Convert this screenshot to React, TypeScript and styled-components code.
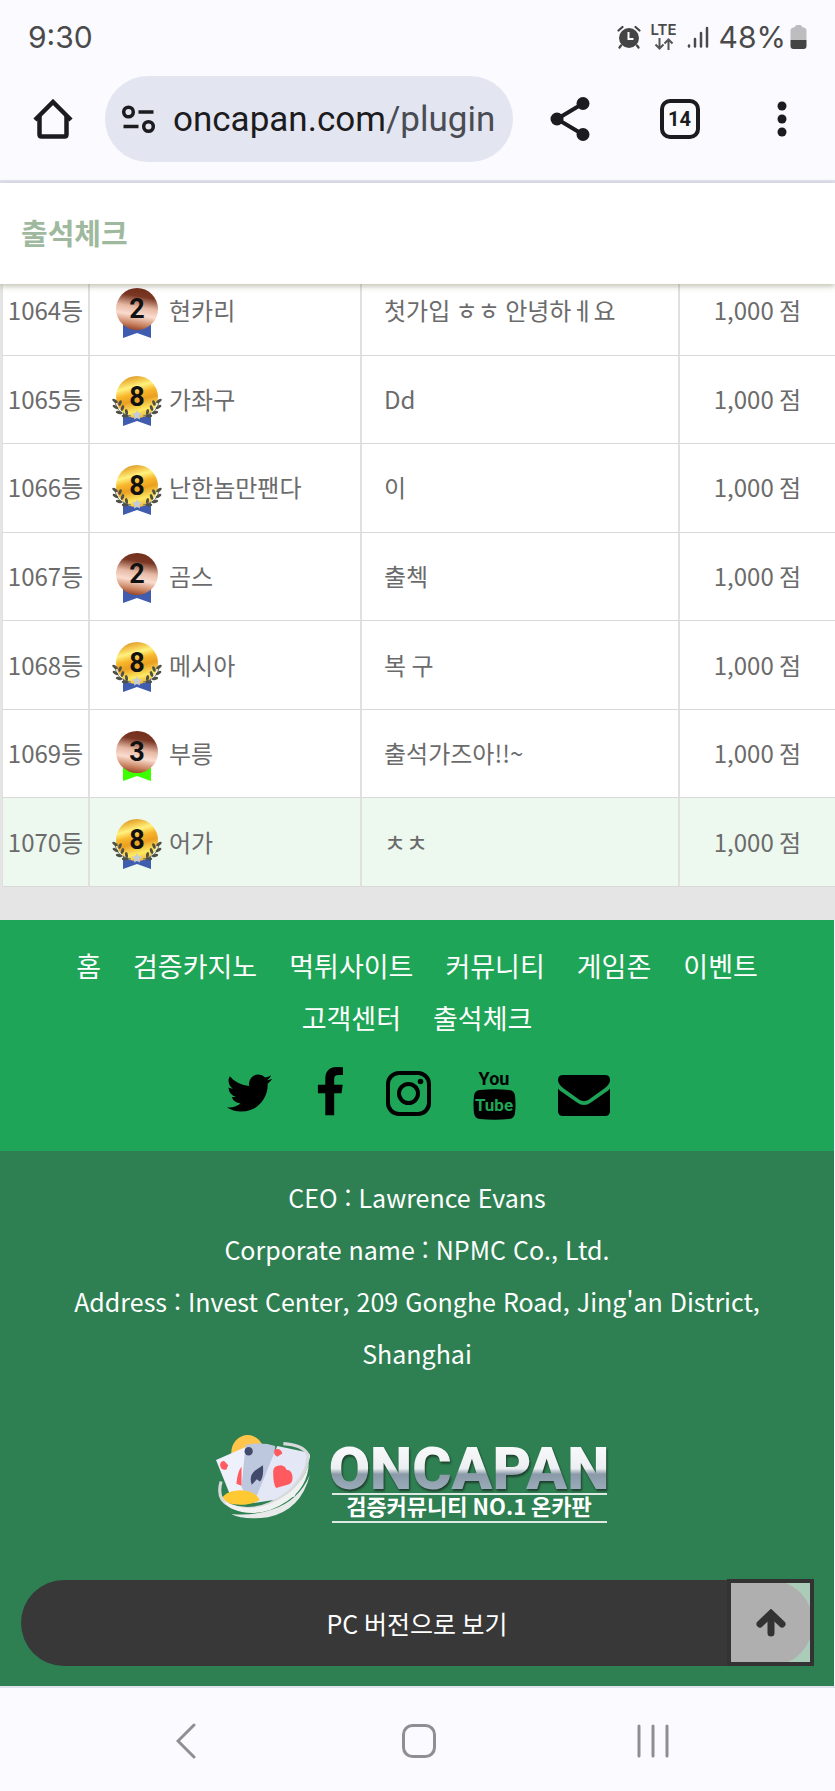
import styled, { createGlobalStyle } from 'styled-components';

const fontKr = `"Noto Sans CJK KR", sans-serif`;

const rows = [
    { rank: 1064, level: 2, name: '현카리', comment: '첫가입 ㅎㅎ 안녕하ㅔ요' },
    { rank: 1065, level: 8, name: '가좌구', comment: 'Dd' },
    { rank: 1066, level: 8, name: '난한놈만팬다', comment: '이' },
    { rank: 1067, level: 2, name: '곰스', comment: '출첵' },
    { rank: 1068, level: 8, name: '메시아', comment: '복 구' },
    { rank: 1069, level: 3, name: '부릉', comment: '출석가즈아!!~' },
    { rank: 1070, level: 8, name: '어가', comment: 'ㅊㅊ' },
];

const links = ['홈', '검증카지노', '먹튀사이트', '커뮤니티', '게임존', '이벤트', '고객센터', '출석체크'];

export default function App() {
    return (
        <Page>
            <GlobalStyle />
            <StatusBar>
                <span>9:30</span>
                <StatusIcons>
                    <AlarmIcon />
                    <LteIcon />
                    <SignalIcon />
                    <Battery>
                        48%
                        <BatteryIcon />
                    </Battery>
                </StatusIcons>
            </StatusBar>

            <Toolbar>
                <IconButton aria-label="홈">
                    <HomeIcon />
                </IconButton>
                <AddressBar>
                    <TuneIcon />
                    <Url>
                        oncapan.com<UrlPath>/plugin</UrlPath>
                    </Url>
                </AddressBar>
                <Actions>
                    <IconButton aria-label="공유">
                        <ShareIcon />
                    </IconButton>
                    <TabsButton>14</TabsButton>
                    <IconButton aria-label="메뉴">
                        <MoreIcon />
                    </IconButton>
                </Actions>
            </Toolbar>

            <SiteHeader>
                <Title>출석체크</Title>
            </SiteHeader>

            <Board>
                <Table>
                    <tbody>
                        {rows.map((row, i) => (
                            <Row key={row.rank} $active={i === rows.length - 1}>
                                <RankCell>{row.rank}등</RankCell>
                                <NameCell>
                                    <Member>
                                        <Medal level={row.level} />
                                        {row.name}
                                    </Member>
                                </NameCell>
                                <CommentCell>{row.comment}</CommentCell>
                                <PointCell>1,000 점</PointCell>
                            </Row>
                        ))}
                    </tbody>
                </Table>
            </Board>

            <FooterNav>
                <Links>
                    {links.map((link) => (
                        <FooterLink key={link} href="#">
                            {link}
                        </FooterLink>
                    ))}
                </Links>
                <Socials>
                    <a href="#" aria-label="Twitter">
                        <TwitterIcon />
                    </a>
                    <a href="#" aria-label="Facebook">
                        <FacebookIcon />
                    </a>
                    <a href="#" aria-label="Instagram">
                        <InstagramIcon />
                    </a>
                    <a href="#" aria-label="YouTube">
                        <YoutubeIcon />
                    </a>
                    <a href="#" aria-label="E-mail">
                        <MailIcon />
                    </a>
                </Socials>
            </FooterNav>

            <Footer>
                <Company lang="ko">
                    <p>CEO : Lawrence Evans</p>
                    <p>Corporate name : NPMC Co., Ltd.</p>
                    <p>Address : Invest Center, 209 Gonghe Road, Jing'an District, Shanghai</p>
                </Company>
                <Logo />
                <Bottom>
                    <PcButton>PC 버전으로 보기</PcButton>
                    <TopButton aria-label="위로">
                        <ArrowUpIcon />
                    </TopButton>
                </Bottom>
            </Footer>

            <SystemNav>
                <IconButton aria-label="뒤로">
                    <BackIcon />
                </IconButton>
                <IconButton aria-label="홈 화면">
                    <SystemHomeIcon />
                </IconButton>
                <IconButton aria-label="최근 앱">
                    <RecentsIcon />
                </IconButton>
            </SystemNav>
        </Page>
    );
}

function AlarmIcon() {
    return (
        <svg width="24" height="24" viewBox="0 0 24 24" fill="#444">
            <circle cx="12" cy="13" r="10" />
            <path d="M1.500 5.500 5.500 2M22.500 5.500 18.500 2M4 20.500 2.500 22.500M20 20.500l1.500 2" stroke="#444" strokeWidth="2.200" strokeLinecap="round" />
            <path d="M11.500 7v7h5" fill="none" stroke="#fafaff" strokeWidth="2" />
        </svg>
    );
}

function LteIcon() {
    return (
        <Lte>
            LTE
            <svg width="20" height="12" viewBox="0 0 20 12" fill="none" stroke="#555" strokeWidth="2">
                <path d="M5.500 0v10M1.500 6.500l4 4 4-4M14.500 12V2M10.500 5.500l4-4 4 4" />
            </svg>
        </Lte>
    );
}

function SignalIcon() {
    return (
        <svg width="22" height="24" viewBox="0 0 22 24" stroke="#4a4a4a" strokeWidth="2.500" strokeLinecap="round">
            <path d="M2 20.500v1M8 14v7.500M14 8v13.500M20 3v18.500" />
        </svg>
    );
}

function BatteryIcon() {
    return (
        <svg width="17" height="24" viewBox="0 0 17 24">
            <path d="M5 2q0-2 2-2h3q2 0 2 2 4 .5 4.500 3v10H.5V5Q1 2.500 5 2z" fill="#bdbdbf" />
            <path d="M.5 15h16v6q0 3-3 3h-10q-3 0-3-3z" fill="#444" />
        </svg>
    );
}

function HomeIcon() {
    return (
        <svg width="40" height="40" viewBox="0 0 40 40" fill="none" stroke="#1c1b20" strokeWidth="4.500">
            <path d="M2 21 20 3l18 18" />
            <path d="M6.500 17v18.500q0 2 2 2h23q2 0 2-2V17" />
        </svg>
    );
}

function TuneIcon() {
    return (
        <svg width="34" height="30" viewBox="0 0 34 30" fill="none" stroke="#1c1b20" strokeWidth="3.500">
            <circle cx="6.500" cy="8" r="4.800" />
            <circle cx="26.500" cy="22.500" r="4.800" />
            <path d="M16.500 8h15M1.500 22.500h15" />
        </svg>
    );
}

function ShareIcon() {
    return (
        <svg width="40" height="44" viewBox="0 0 40 44" fill="#1c1b20">
            <path d="M33 6.500 7 22l26 15.500" fill="none" stroke="#1c1b20" strokeWidth="4" />
            <circle cx="33" cy="6.500" r="6.500" />
            <circle cx="7" cy="22" r="6.500" />
            <circle cx="33" cy="37.500" r="6.500" />
        </svg>
    );
}

function MoreIcon() {
    return (
        <svg width="26" height="36" viewBox="-8 0 26 36" fill="#1c1b20">
            <circle cx="5" cy="5" r="4.500" />
            <circle cx="5" cy="18" r="4.500" />
            <circle cx="5" cy="31" r="4.500" />
        </svg>
    );
}

function Laurel() {
    return (
        <>
            <path d="M3 27q2 12 16 14" fill="none" stroke="#77796a" strokeWidth="1" />
            <ellipse cx="3" cy="26" rx="3.200" ry="1.500" transform="rotate(35 3 26)" />
            <ellipse cx="8" cy="28" rx="3" ry="1.500" transform="rotate(-65 8 28)" />
            <ellipse cx="3.500" cy="32" rx="3.200" ry="1.500" transform="rotate(30 3.500 32)" />
            <ellipse cx="10.500" cy="33" rx="3" ry="1.500" transform="rotate(-70 10.500 33)" />
            <ellipse cx="7" cy="37.500" rx="3.200" ry="1.500" transform="rotate(15 7 37.500)" />
            <ellipse cx="14.500" cy="37" rx="3" ry="1.500" transform="rotate(-100 14.500 37)" />
            <ellipse cx="13" cy="41" rx="3.200" ry="1.400" />
        </>
    );
}

function Medal({ level }: { level: number }) {
    const gold = level === 8;
    const id = `medal-${level}`;
    return (
        <svg width="50" height="58" viewBox="0 -6 50 58">
            <defs>
                {gold ? (
                    <linearGradient id={id} x1="0.350" y1="0" x2="0.600" y2="1">
                        <stop offset="0" stopColor="#d99a2c" />
                        <stop offset="0.120" stopColor="#f2c146" />
                        <stop offset="0.260" stopColor="#fff27e" />
                        <stop offset="0.420" stopColor="#f7b62a" />
                        <stop offset="0.580" stopColor="#eb9f20" />
                        <stop offset="0.820" stopColor="#fdea62" />
                        <stop offset="1" stopColor="#eeb13a" />
                    </linearGradient>
                ) : (
                    <linearGradient id={id} x1="0.580" y1="0" x2="0.420" y2="1">
                        <stop offset="0" stopColor="#722e1a" />
                        <stop offset="0.200" stopColor="#7a3824" />
                        <stop offset="0.450" stopColor="#e6b8a4" />
                        <stop offset="0.640" stopColor="#fadccf" />
                        <stop offset="0.850" stopColor="#cc8766" />
                        <stop offset="1" stopColor="#964428" />
                    </linearGradient>
                )}
            </defs>
            <path d="M11 36h28v15l-14-5-14 5z" fill={level === 3 ? '#3cff00' : '#3f5cae'} />
            <circle cx="25" cy="22" r="21" fill={`url(#${id})`} />
            {gold && (
                <>
                    <g fill="#4f5147">
                        <Laurel />
                    </g>
                    <g fill="#4f5147" transform="matrix(-1 0 0 1 50 0)">
                        <Laurel />
                    </g>
                    <path d="M25 35l1.500 3 3.500.5-2.500 2.500.5 3.500-3-1.500-3 1.500.5-3.500-2.500-2.500 3.500-.5z" fill="#c6ccd6" />
                </>
            )}
            <MedalText x="25" y="31">
                {level}
            </MedalText>
        </svg>
    );
}

function TwitterIcon() {
    return (
        <svg width="49" height="52" viewBox="64 0 1664 1792">
            <path d="M1684 408q-67 98-162 167 1 14 1 42 0 130-38 259.500t-115.500 248.500-184.500 210.500-258 146-323 54.500q-271 0-496-145 35 4 78 4 225 0 401-138-105-2-188-64.500t-114-159.500q33 5 61 5 43 0 85-11-112-23-185.500-111.500t-73.500-205.500v-4q68 38 146 41-66-44-105-115t-39-154q0-88 44-163 121 149 294.500 238.500t371.500 99.500q-8-38-8-74 0-134 94.500-228.500t228.500-94.500q140 0 236 102 109-21 205-78-37 115-142 178 93-10 186-50z" />
        </svg>
    );
}

function FacebookIcon() {
    return (
        <svg width="30" height="52" viewBox="384 0 1024 1792">
            <path d="M1343 12v264h-157q-86 0-116 36t-30 108v189h293l-39 296h-254v759h-306v-759h-255v-296h255v-218q0-186 104-288.500t277-102.500q147 0 228 12z" />
        </svg>
    );
}

function InstagramIcon() {
    return (
        <svg width="45" height="52" viewBox="0 0 45 52">
            <rect x="2" y="6" width="41" height="41" rx="11" fill="none" stroke="#000" strokeWidth="4" />
            <circle cx="22.500" cy="26.500" r="9.500" fill="none" stroke="#000" strokeWidth="4" />
            <circle cx="34.500" cy="14.500" r="2.800" />
        </svg>
    );
}

function YoutubeIcon() {
    return (
        <svg width="45" height="53" viewBox="0 0 45 53">
            <path d="M8 23q14.500-1.500 29 0 5.500.5 6 6 1 8.500 0 17-.5 5.500-6 6-14.500 1.500-29 0-5.500-.5-6-6-1-8.500 0-17 .5-5.500 6-6z" />
            <YoutubeText x="22" y="18" fill="#000" $size={18}>
                You
            </YoutubeText>
            <YoutubeText x="22" y="44" fill="#1fa557" $size={17}>
                Tube
            </YoutubeText>
        </svg>
    );
}

function MailIcon() {
    return (
        <svg width="52" height="52" viewBox="0 0 52 52">
            <path d="M5 8h42q5 0 5 5 0 4-5 8L31 32.500q-5 3.500-10 0L5 21q-5-4-5-8 0-5 5-5z" />
            <path d="M0 21.500q1.500 2 4 3.500l15 10.500q7 5 14 0L48 25q2.500-1.500 4-3.500V44q0 5-5 5H5q-5 0-5-5z" />
        </svg>
    );
}

function Logo() {
    return (
        <LogoSvg viewBox="0 0 400 92" role="img" aria-label="ONCAPAN">
            <defs>
                <linearGradient id="steel" x1="0" y1="0" x2="0" y2="1">
                    <stop offset="0" stopColor="#fff" />
                    <stop offset="0.500" stopColor="#eceff2" />
                    <stop offset="0.580" stopColor="#8b9aa8" />
                    <stop offset="1" stopColor="#a9bccb" />
                </linearGradient>
            </defs>
            <g transform="translate(-2 3) scale(1.020 1.080)">
                <circle cx="32" cy="17" r="16" fill="#ffc54b" />
                <path d="M1 24 30 12l16 44-28 8z" fill="#eef1fb" />
                <path d="M30 10q16-3 29 1l-5 46H30l-4-8z" fill="#bdc8df" />
                <path d="M61 11l29 6q4 1 3 5L78 58l-40 6z" fill="#e4e8f6" />
                <circle cx="33" cy="16" r="4" fill="#414a6b" />
                <path d="M47 29q1 12-3 15l-3-2-5 5q-3-8 3-13z" fill="#414a6b" />
                <path d="M9 25l4 4-2 4q-5 1-6-4 0-4 4-4zM26 30v18l-5-2q1-11 5-16zM59 14q6-1 7 4l-5 3q-5-3-2-7zM57 35q0-6 8-6 4 1 5 4 6 0 6 8 0 5-5 6l-11 3q-3-3-3-15z" fill="#ff5a5f" />
                <path d="M6 62q2-9 18-10 15 0 20 9-12 7-33 3z" fill="#ffc933" />
                <path d="M6 44Q1 60 14 66q28 10 58-12 20-18 19-35-5-9-24-10" fill="none" stroke="#d7d9da" strokeWidth="3" />
                <path d="M9 62q28 15 60-5 18-12 23-30-1 22-21 35-28 18-55 7-4-2-7-7z" fill="#f0f1f1" />
                <path d="M93 38Q82 62 56 70q-18 6-40 4 12 6 36 3 32-6 41-39z" fill="#e8eaea" />
            </g>
            <LogoName x="252" y="58" fill="url(#steel)">
                ONCAPAN
            </LogoName>
            <path d="M115 63h275M115 91h275" stroke="#dfe9e3" strokeWidth="2" />
            <LogoTag x="252" y="84">
                검증커뮤니티 NO.1 온카판
            </LogoTag>
        </LogoSvg>
    );
}

function ArrowUpIcon() {
    return (
        <svg width="30" height="28" viewBox="0 0 30 28" fill="none" stroke="#333" strokeWidth="7">
            <path d="M15 24V6" strokeLinecap="round" />
            <path d="M4 15 15 4.500 26 15" strokeLinecap="round" />
        </svg>
    );
}

function BackIcon() {
    return (
        <svg width="20" height="36" viewBox="0 0 20 36" fill="none" stroke="#8f8f92" strokeWidth="3">
            <path d="M18 2 2 18l16 16" strokeLinecap="round" />
        </svg>
    );
}

function SystemHomeIcon() {
    return (
        <svg width="34" height="36" viewBox="0 0 34 36" fill="none" stroke="#8f8f92" strokeWidth="3">
            <rect x="1.500" y="2.500" width="31" height="31" rx="9" />
        </svg>
    );
}

function RecentsIcon() {
    return (
        <svg width="32" height="36" viewBox="0 0 32 36" stroke="#8f8f92" strokeWidth="3" strokeLinecap="round">
            <path d="M2 3v30M16 3v30M30 3v30" />
        </svg>
    );
}

// Styled Components
const GlobalStyle = createGlobalStyle`
    * {
        box-sizing: border-box;
    }

    body {
        margin: 0;
        background: #fafaff;
        font-family: ${fontKr};
    }

    svg {
        display: block;
        flex-shrink: 0;
    }

    p, h1 {
        margin: 0;
    }
`;

const Page = styled.div`
    width: 100%;
    overflow: hidden;
`;

const StatusBar = styled.div`
    display: flex;
    align-items: center;
    justify-content: space-between;
    height: 76px;
    padding: 0 28px 2px;
    font: 400 30px Inter, sans-serif;
    color: #4a4a4a;
`;

const StatusIcons = styled.div`
    display: flex;
    align-items: center;
    gap: 10px;
`;

const Lte = styled.span`
    display: flex;
    flex-direction: column;
    align-items: center;
    gap: 2px;
    font: 600 15px/12px Inter, sans-serif;
`;

const Battery = styled.span`
    display: flex;
    align-items: center;
    gap: 4px;
`;

const Toolbar = styled.div`
    display: flex;
    align-items: center;
    height: 107px;
    padding: 0 40px 18px 33px;
    border-bottom: 3px solid #e1e2ee;
`;

const IconButton = styled.button`
    display: flex;
    padding: 0;
    border: none;
    background: none;
    cursor: pointer;
`;

const AddressBar = styled.div`
    display: flex;
    align-items: center;
    gap: 17px;
    width: 408px;
    height: 86px;
    margin-left: 32px;
    padding-left: 17px;
    border-radius: 43px;
    background: #e3e6f0;
`;

const Url = styled.span`
    font: 400 35px Roboto, sans-serif;
    color: #1c1b20;
`;

const UrlPath = styled.span`
    color: #4a4c54;
`;

const Actions = styled.div`
    display: flex;
    flex: 1;
    align-items: center;
    justify-content: space-between;
    padding-left: 37px;
`;

const TabsButton = styled.button`
    width: 40px;
    height: 40px;
    padding: 0;
    border: 4px solid #1c1b20;
    border-radius: 10px;
    background: none;
    font: 700 20px Roboto, sans-serif;
    color: #1c1b20;
`;

const SiteHeader = styled.header`
    position: relative;
    z-index: 1;
    display: flex;
    align-items: center;
    height: 101px;
    padding: 0 21px 4px;
    background: #fff;
    box-shadow: 0 2px 6px rgba(90, 90, 50, 0.4);
`;

const Title = styled.h1`
    font-size: 29px;
    font-weight: 700;
    color: #9fb99f;
`;

/* the first row slides under the header */
const Board = styled.main`
    margin-top: -17px;
    padding: 0 0 33px 2px;
    background: #e5e5e5;
`;

const Table = styled.table`
    width: 100%;
    height: 620px;
    table-layout: fixed;
    border-spacing: 0;
    background: #fff;
    font-size: 24px;
    color: #6b6b6b;
`;

const Row = styled.tr<{ $active: boolean }>`
    background: ${({ $active }) => ($active ? '#edf8ef' : '#fff')};
`;

const Cell = styled.td`
    padding: 0 0 2px 22px;
    border-bottom: 1px solid #d9d9d9;
    border-left: 2px solid #e0e0e0;
`;

const RankCell = styled(Cell)`
    width: 86px;
    padding: 0 0 2px;
    border-left-width: 1px;
    text-align: center;
`;

const NameCell = styled(Cell)`
    width: 272px;
`;

const CommentCell = styled(Cell)`
    width: 318px;
`;

const PointCell = styled(Cell)`
    padding: 0 0 2px;
    text-align: center;
`;

const Member = styled.div`
    display: flex;
    align-items: center;
    gap: 7px;
`;

const MedalText = styled.text`
    font: 700 27px Roboto, sans-serif;
    text-anchor: middle;
    fill: #111;
`;

const YoutubeText = styled.text<{ $size: number }>`
    font: 700 ${({ $size }) => $size}px Roboto, sans-serif;
    text-anchor: middle;
`;

const FooterNav = styled.nav`
    margin-right: 1px;
    padding: 20px 60px 32px;
    background: #1fa557;
`;

const Links = styled.div`
    display: flex;
    flex-wrap: wrap;
    justify-content: center;
    column-gap: 32px;
`;

const FooterLink = styled.a`
    font-size: 27px;
    line-height: 52px;
    color: #fff;
    text-decoration: none;
`;

const Socials = styled.div`
    display: flex;
    justify-content: center;
    gap: 41px;
    height: 52px;
    margin-top: 23px;
`;

const Footer = styled.footer`
    margin-right: 1px;
    padding: 20px 21px;
    background: #2e8052;
`;

const Company = styled.div`
    padding: 0 40px;
    font-size: 25px;
    line-height: 52px;
    text-align: center;
    color: #fff;
`;

const LogoSvg = styled.svg`
    width: 400px;
    height: 92px;
    margin: 52px auto 57px;
    overflow: visible;
`;

const LogoName = styled.text`
    font: 900 60px Roboto, sans-serif;
    text-anchor: middle;
    filter: drop-shadow(1px 2px 1px #1d3a2a);
`;

const LogoTag = styled.text`
    font: 700 22px ${fontKr};
    text-anchor: middle;
    fill: #fff;
`;

const Bottom = styled.div`
    position: relative;
`;

const PcButton = styled.button`
    display: block;
    width: 100%;
    height: 86px;
    border: none;
    border-radius: 43px;
    background: #383838;
    font: 400 25px ${fontKr};
    color: #fff;
`;

const TopButton = styled.button`
    position: absolute;
    top: -1px;
    right: -1px;
    display: flex;
    align-items: center;
    justify-content: center;
    width: 87px;
    height: 87px;
    padding: 0;
    border: 4px solid #333;
    background: rgba(255, 255, 255, 0.6);
    background-clip: padding-box;
`;

const SystemNav = styled.nav`
    display: grid;
    grid-template-columns: repeat(3, 1fr);
    justify-items: center;
    padding: 35px 65px 32px 69px;
    border-top: 2px solid #dfe2ea;
    background: #fafaff;
`;
